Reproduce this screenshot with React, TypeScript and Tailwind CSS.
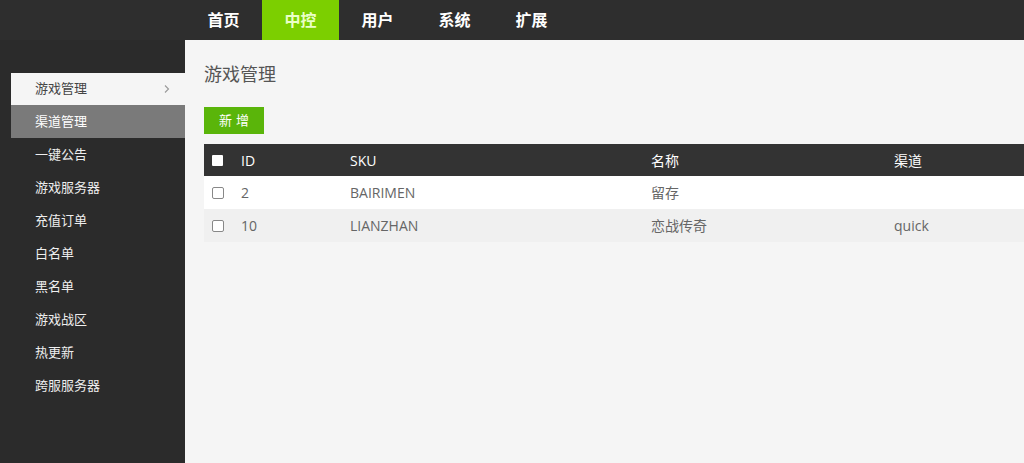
import React from "react";

const font = { fontFamily: '"Open Sans", "Noto Sans CJK SC", sans-serif' };

const navs = ["首页", "中控", "用户", "系统", "扩展"];
const side = ["一键公告", "游戏服务器", "充值订单", "白名单", "黑名单", "游戏战区", "热更新", "跨服服务器"];
const rows = [
  { id: "2", sku: "BAIRIMEN", name: "留存", ch: "" },
  { id: "10", sku: "LIANZHAN", name: "恋战传奇", ch: "quick" },
];

function Cols({ a, b, c, d, e, cls }: { a: React.ReactNode; b: string; c: string; d: string; e: string; cls: string }) {
  return (
    <div className={`flex items-center text-[14px] ${cls}`}>
      <div className="w-[37px] pl-[8px] flex items-center">{a}</div>
      <div className="w-[109px]">{b}</div>
      <div className="w-[301px]">{c}</div>
      <div className="w-[243px]">{d}</div>
      <div className="flex-1">{e}</div>
    </div>
  );
}

export default function App() {
  return (
    <div className="w-[1024px] h-[463px] flex flex-col overflow-hidden bg-[#f5f5f5]" style={font}>
      <div className="h-[40px] flex bg-[#2e2e2e] shrink-0">
        <div className="w-[185px]" />
        {navs.map((n, i) => (
          <div
            key={n}
            className={`w-[77px] h-[40px] flex items-center justify-center text-[16px] font-bold ${
              i === 1 ? "bg-[#7ccf00] text-[#eaffc8]" : "text-white"
            }`}
          >
            {n}
          </div>
        ))}
      </div>
      <div className="flex flex-1">
        <div className="w-[185px] bg-[#2b2b2b] pt-[33px] shrink-0">
          <div className="ml-[11px] h-[32px] bg-[#f5f5f5] flex items-center justify-between pl-[24px] pr-[14px] text-[13px] text-[#444]">
            <span>游戏管理</span>
            <svg width="8" height="10" viewBox="0 0 8 10" fill="none">
              <path d="M2 1.5L5.5 5L2 8.5" stroke="#999" strokeWidth="1.1" />
            </svg>
          </div>
          <div className="ml-[11px] h-[33px] bg-[#7a7a7a] flex items-center pl-[24px] text-[13px] text-white">渠道管理</div>
          {side.map((s) => (
            <div key={s} className="ml-[11px] h-[33px] flex items-center pl-[24px] text-[13px] text-[#eeeeee]">
              {s}
            </div>
          ))}
        </div>
        <div className="flex-1 pl-[19px] pt-[22px]">
          <div className="text-[18px] leading-[24px] text-[#555]">游戏管理</div>
          <div className="mt-[21px] w-[60px] h-[27px] bg-[#5ab50a] text-white text-[13px] flex items-center justify-center tracking-[4px] pl-[4px]">
            新增
          </div>
          <div className="mt-[10px] w-[820px]">
            <Cols
              cls="h-[32px] bg-[#333333] text-white"
              a={<span className="w-[11px] h-[11px] bg-white rounded-[1px]" />}
              b="ID"
              c="SKU"
              d="名称"
              e="渠道"
            />
            {rows.map((r, i) => (
              <Cols
                key={r.id}
                cls={`h-[33px] text-[#666] ${i === 0 ? "bg-white" : "bg-[#f0f0f0]"}`}
                a={<span className="w-[12px] h-[12px] border border-[#888] rounded-[2px] bg-white" />}
                b={r.id}
                c={r.sku}
                d={r.name}
                e={r.ch}
              />
            ))}
          </div>
        </div>
      </div>
    </div>
  );
}
